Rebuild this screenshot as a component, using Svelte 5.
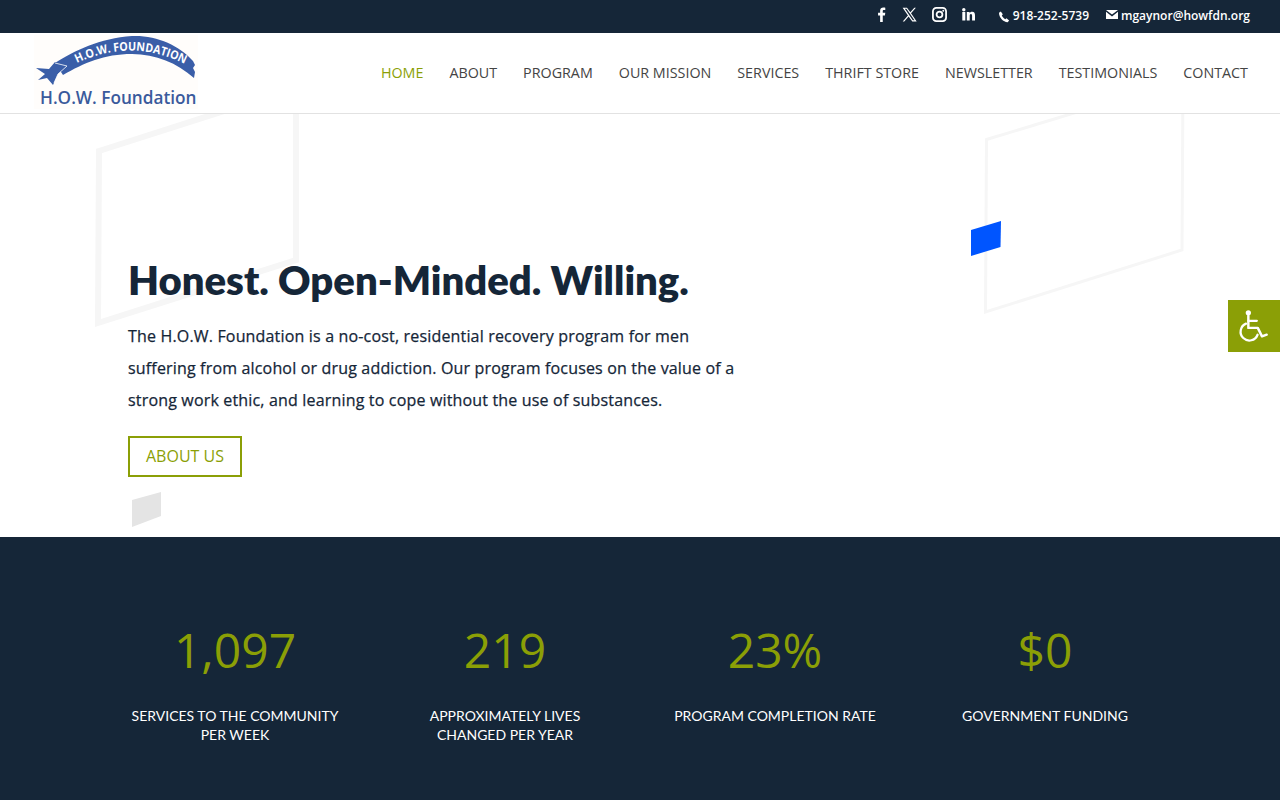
<script>
  const NAV = ['Home', 'About', 'Program', 'Our Mission', 'Services', 'Thrift Store', 'Newsletter', 'Testimonials', 'Contact'];

  const STATS = [
    { value: '1,097', label: 'Services to the community per week' },
    { value: '219', label: 'Approximately lives changed per year' },
    { value: '23%', label: 'Program completion rate' },
    { value: '$0', label: 'Government funding' },
  ];
</script>

<div class="topbar">
  <div class="social">
    <svg width="10" height="15" viewBox="0 0 10 16" aria-label="Facebook"><path d="M3 16V9H.8V6.200H3V4.100C3 1.700 4.400.6 6.400.6c1 0 1.800.1 2.100.1v2.500H7.100C6 3.200 5.800 3.700 5.800 4.500v1.700h2.700L8.100 9H5.800v7z" fill="#fff"/></svg>
    <svg width="15" height="15" viewBox="0 0 24 24" aria-label="X"><path d="M1 1h7l5.300 7.300L19.700 1h2.500l-7.800 8.900L23.500 23h-7l-5.900-8L3.600 23H1.100l8.400-9.600zM4.500 2.600l12.800 18.700h2.700L7.100 2.600z" fill="#fff"/></svg>
    <svg width="15" height="15" viewBox="0 0 16 16" aria-label="Instagram"><rect x="1" y="1" width="14" height="14" rx="3.600" fill="none" stroke="#fff" stroke-width="1.900"/><circle cx="8" cy="8" r="3.100" fill="none" stroke="#fff" stroke-width="1.900"/><circle cx="12" cy="4" r="1" fill="#fff"/></svg>
    <svg width="13" height="13" viewBox="0 0 13 13" aria-label="LinkedIn"><rect x=".3" y="4" width="3" height="8.500" fill="#fff"/><circle cx="1.800" cy="1.700" r="1.700" fill="#fff"/><path d="M4.800 4h2.800v1.200C8 4.400 9 3.800 10.200 3.800c2.200 0 2.800 1.500 2.800 3.600v5.100h-2.900V8c0-1-.2-1.900-1.200-1.900S7.700 7 7.700 8v4.500H4.800z" fill="#fff"/></svg>
  </div>
  <span class="contact phone">
    <svg width="12" height="12" viewBox="0 0 12 12"><path d="M1 1.800 2.800.6l2 2.700-1 1.200c.5 1.400 2 3 3.500 3.700l1.200-1 2.600 2.200-1.400 1.800C5.500 11.300.9 6.500 1 1.800z" fill="#fff"/></svg>918-252-5739
  </span>
  <span class="contact mail">
    <svg width="12" height="9" viewBox="0 0 12 9"><path d="M0 0h12L6 4.600zM0 1.800V9h12V1.800L6 6.400z" fill="#fff"/></svg>mgaynor@howfdn.org
  </span>
</div>

<header>
  <div class="logo">
    <svg width="164" height="74" viewBox="0 0 164 74" role="img" aria-label="H.O.W. Foundation">
      <rect width="164" height="74" fill="#fffdfb"/>
      <path d="M21 28C40 16 66 3 98 1 122 0 145 10 159 26L161 30 159 33 161 37 160 43C143 28 122 19 98 19 70 19 50 28 29 40Z" fill="#3a5ea8"/>
      <path d="M2 33 15 34 21 27 33 31 24 39 19 50 13 43 4 45 11 39Z" fill="#3a5ea8"/>
      <path d="M21 28 33 31 24 39 20 48" stroke="#fff" stroke-width=".8" fill="none"/>
      <defs><path id="arc" d="M41 29Q96 2 151 29"/></defs>
      <text class="arc"><textPath href="#arc" startOffset="2" textLength="112" lengthAdjust="spacingAndGlyphs">H.O.W. FOUNDATION</textPath></text>
      <text class="name" x="6" y="69">H.O.W. Foundation</text>
    </svg>
  </div>
  <nav>
    {#each NAV as item, i}
      <a href="#top" class:active={i === 0}>{item}</a>
    {/each}
  </nav>
</header>

<section class="hero">
  <svg class="shapes" width="1280" height="423" viewBox="0 114 1280 423" aria-hidden="true">
    <path d="M99 151 296 88V260L98 323Z" fill="none" stroke="#f6f6f6" stroke-width="6"/>
    <path d="M986.500 139.500 1183 80 1182 250 985.500 312Z" fill="none" stroke="#f6f6f6" stroke-width="3"/>
    <path d="M971 230 1001 221 1000.500 247 971 256Z" fill="#0055ff"/>
    <path d="M132 500 161 492 161 516 132 527Z" fill="#e4e4e4"/>
  </svg>
  <div class="copy">
    <h1>Honest. Open-Minded. Willing.</h1>
    <p>The H.O.W. Foundation is a no-cost, residential recovery program for men suffering from alcohol or drug addiction. Our program focuses on the value of a strong work ethic, and learning to cope without the use of substances.</p>
    <a class="btn" href="#top">About Us</a>
  </div>
  <div class="a11y">
    <svg width="32" height="34" viewBox="0 0 34 36" aria-label="Accessibility">
      <circle cx="11" cy="4" r="2.800" fill="#fff"/>
      <path d="M11 7v13h10l4.500 9 5-1.800" fill="none" stroke="#fff" stroke-width="2.600" stroke-linejoin="round" stroke-linecap="round"/>
      <path d="M11 12.500h9" stroke="#fff" stroke-width="2.400" stroke-linecap="round"/>
      <path d="M8.500 15.500a9.300 9.300 0 1 0 12.300 11.800" fill="none" stroke="#fff" stroke-width="2.400" stroke-linecap="round"/>
    </svg>
  </div>
</section>

<section class="stats">
  {#each STATS as s}
    <div class="stat">
      <div class="num">{s.value}</div>
      <div class="label">{s.label}</div>
    </div>
  {/each}
</section>

<style>
  :global(body) {
    margin: 0;
    font-family: "Open Sans", sans-serif;
    background: #fff;
  }
  .topbar {
    height: 33px;
    box-sizing: border-box;
    background: #152638;
    display: flex;
    justify-content: flex-end;
    align-items: center;
    padding-right: 30px;
    color: #fff;
    font-size: 12px;
    font-weight: 600;
  }
  .social {
    display: flex;
    align-items: center;
    gap: 15px;
    margin-right: 23px;
    margin-top: -5px;
  }
  .contact {
    display: flex;
    align-items: center;
    margin-top: -2px;
  }
  .phone { margin-right: 17px; }
  .phone svg { margin: 3px 3px 0 0; }
  .mail svg { margin: -2px 3px 0 0; }
  header {
    height: 81px;
    box-sizing: border-box;
    border-bottom: 1px solid #e2e2e2;
    display: flex;
    justify-content: space-between;
    align-items: center;
    padding: 0 32px 0 34px;
  }
  .logo { height: 74px; margin-top: -2px; }
  .arc {
    font: 700 12px "Open Sans", sans-serif;
    fill: #fff;
  }
  .name {
    font: 600 17.200px "Open Sans", sans-serif;
    fill: #3a5a9c;
  }
  nav {
    display: flex;
    gap: 26px;
    font-size: 14.300px;
    margin-top: -2px;
  }
  nav a {
    color: #444;
    text-decoration: none;
    text-transform: uppercase;
  }
  nav a.active { color: #8b9f06; }
  .hero {
    position: relative;
    height: 423px;
    overflow: hidden;
    padding: 141px 0 0 128px;
    box-sizing: border-box;
  }
  .shapes {
    position: absolute;
    left: 0;
    top: 0;
  }
  .copy {
    position: relative;
    width: 615px;
  }
  h1 {
    margin: 0 0 15px;
    font: 800 40px/50px Lato, sans-serif;
    color: #152638;
  }
  p {
    margin: 0 0 20px;
    font-size: 16px;
    font-weight: 500;
    letter-spacing: .17px;
    -webkit-text-stroke: .25px #152638;
    line-height: 32px;
    color: #152638;
  }
  .btn {
    display: inline-block;
    border: 2px solid #8b9f06;
    padding: 8px 16px;
    color: #8b9f06;
    font-size: 16px;
    line-height: 21px;
    text-decoration: none;
    text-transform: uppercase;
  }
  .a11y {
    position: absolute;
    right: 0;
    top: 186px;
    width: 52px;
    height: 52px;
    background: #8b9f06;
    display: flex;
    align-items: center;
    justify-content: center;
  }
  .stats {
    height: 263px;
    box-sizing: border-box;
    background: #152638;
    display: grid;
    grid-template-columns: repeat(4, 210px);
    justify-content: center;
    column-gap: 60px;
    padding-top: 80px;
    color: #fff;
    text-align: center;
  }
  .num {
    font-size: 48px;
    line-height: 66px;
    color: #8b9f06;
    margin-bottom: 23px;
  }
  .label {
    font: 400 14px/19px Lato, sans-serif;
    text-transform: uppercase;
  }
</style>
